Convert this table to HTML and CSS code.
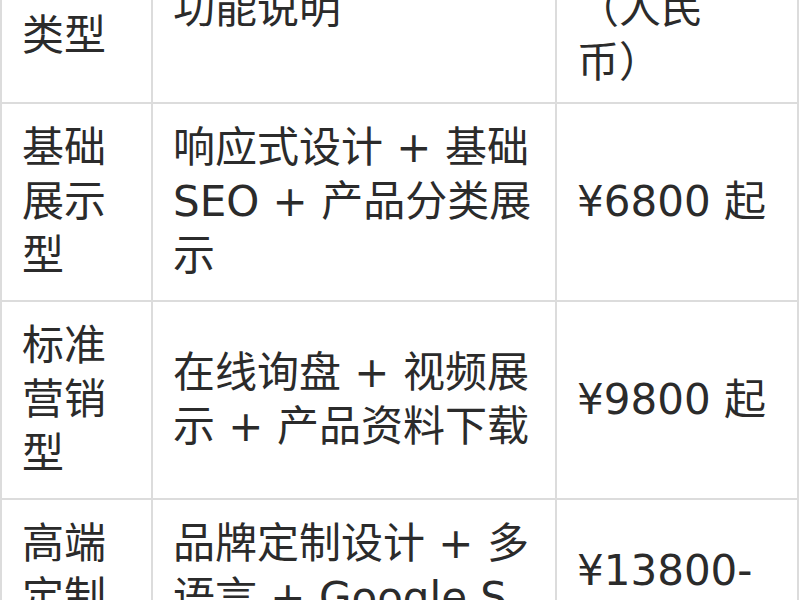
FILE: index.html
```html
<!DOCTYPE html>
<html lang="zh-CN">
<head>
<meta charset="utf-8">
<title>套餐价格</title>
<link rel="stylesheet" href="styles.css">
</head>
<body>
<table class="price-table">
  <colgroup>
    <col class="col-type">
    <col class="col-desc">
    <col class="col-price">
  </colgroup>
  <thead>
    <tr>
      <th>套餐类型</th>
      <th>功能说明</th>
      <th>参考价格（人民币）</th>
    </tr>
  </thead>
  <tbody>
    <tr>
      <td>基础展示型</td>
      <td class="desc">响应式设计 + 基础 SEO + 产品分类展示</td>
      <td>¥6800 起</td>
    </tr>
    <tr>
      <td>标准营销型</td>
      <td class="desc">在线询盘 + 视频展示 + 产品资料下载</td>
      <td>¥9800 起</td>
    </tr>
    <tr>
      <td>高端定制型</td>
      <td class="desc">品牌定制设计 + 多语言 + Google SEO 优化</td>
      <td>¥13800-25800 起</td>
    </tr>
  </tbody>
</table>
</body>
</html>
```

FILE: styles.css
```css
html, body {
  margin: 0;
  padding: 0;
  background: #ffffff;
}

body {
  overflow: hidden;
  font-family: "DejaVu Sans", "Noto Sans CJK SC", sans-serif;
  color: #2b2b2b;
}

.price-table {
  width: 799px;
  margin-top: -96px;
  border-collapse: collapse;
  table-layout: fixed;
  font-size: 42px;
  line-height: 54px;
  text-spacing-trim: space-all;
}

.col-type { width: 151px; }
.col-desc { width: 404px; }
.col-price { width: auto; }

.price-table th,
.price-table td {
  border: 2px solid #dcdcdc;
  padding: 17px 20px;
  text-align: left;
  vertical-align: middle;
  font-weight: normal;
  word-break: break-all;
}

.price-table th {
  padding-top: 22px;
  padding-bottom: 12px;
}

.price-table .desc {
  padding-right: 23px;
}
```
